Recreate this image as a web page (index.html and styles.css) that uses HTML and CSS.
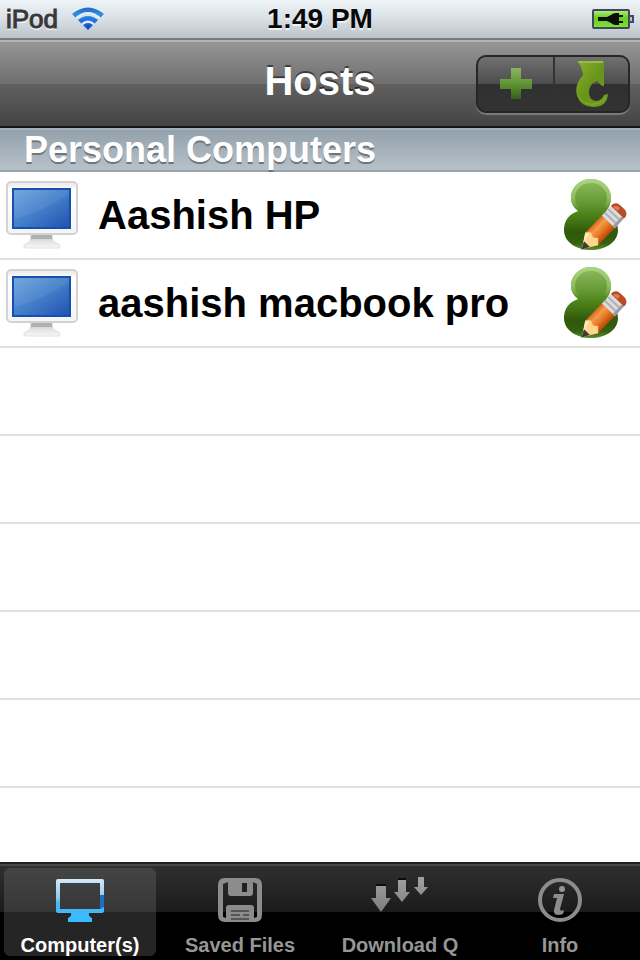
FILE: index.html
```html
<!DOCTYPE html>
<html lang="en">
<head>
    <meta charset="UTF-8">
    <meta name="viewport" content="width=device-width, initial-scale=1.0">
    <title>Hosts</title>
    <link rel="stylesheet" href="styles.css">
</head>
<body>
    <!-- shared icons -->
    <svg class="defs" width="0" height="0" aria-hidden="true">
        <defs>
            <linearGradient id="screen" x1="0" y1="0" x2="1" y2="1">
                <stop offset="0" stop-color="#6da4de"/>
                <stop offset="0.5" stop-color="#447fca"/>
                <stop offset="1" stop-color="#2250b0"/>
            </linearGradient>
            <linearGradient id="bezel" x1="0" y1="0" x2="0" y2="1">
                <stop offset="0" stop-color="#e6e6e6"/>
                <stop offset="0.15" stop-color="#ffffff"/>
                <stop offset="1" stop-color="#f4f4f4"/>
            </linearGradient>
            <linearGradient id="stand" x1="0" y1="0" x2="0" y2="1">
                <stop offset="0" stop-color="#aaaaaa"/>
                <stop offset="0.5" stop-color="#e2e2e2"/>
                <stop offset="1" stop-color="#f7f7f7"/>
            </linearGradient>
            <linearGradient id="person" gradientUnits="userSpaceOnUse" x1="0" y1="2" x2="0" y2="72">
                <stop offset="0" stop-color="#8dbb5f"/>
                <stop offset="0.3" stop-color="#679c37"/>
                <stop offset="0.5" stop-color="#4c8118"/>
                <stop offset="0.75" stop-color="#2f580b"/>
                <stop offset="0.9" stop-color="#34600e"/>
                <stop offset="1" stop-color="#5c8f2c"/>
            </linearGradient>
            <linearGradient id="rim" x1="0" y1="0" x2="0" y2="1">
                <stop offset="0" stop-color="#a9d37e"/>
                <stop offset="0.6" stop-color="#8fc060"/>
                <stop offset="1" stop-color="#8fc060" stop-opacity="0"/>
            </linearGradient>
            <linearGradient id="wood" x1="0" y1="0" x2="0" y2="1">
                <stop offset="0" stop-color="#d9681c"/>
                <stop offset="0.3" stop-color="#f59a4a"/>
                <stop offset="0.6" stop-color="#e87a25"/>
                <stop offset="1" stop-color="#b8450b"/>
            </linearGradient>
        </defs>
        <symbol id="monitor" viewBox="0 0 72 68">
            <path d="M25 53h21l1 7 7 4q1 3-2 3H20q-3 0-2-3l6-4z" fill="url(#stand)" stroke="#e2e2e2"/>
            <path d="M26 54h20v4H25z" fill="#b0b0b0"/>
            <rect x="1" y="1" width="70" height="52" rx="4" fill="url(#bezel)" stroke="#d3d3d3" stroke-width="2"/>
            <rect x="7" y="8" width="57" height="39" fill="url(#screen)" stroke="#1450ad" stroke-width="2"/>
            <path d="M8 9h55v4Q38 30 8 38z" fill="#ffffff" opacity="0.06"/>
        </symbol>
        <symbol id="edit-user" viewBox="0 0 66 74">
            <path d="M16 33Q9 28 9 20C9 9 18 1 29 1s20 8 20 19q0 7-4 12 11 7 11 20c0 12-12 20-27 20S2 64 2 52q0-14 14-19z" fill="url(#person)"/>
            <path d="M16 31Q11 26 11 20C11 10 19 3 29 3s18 7 18 17q0 6-4 11" fill="none" stroke="url(#rim)" stroke-width="4"/>
            <g transform="translate(20 71) rotate(-46)">
                <path d="M0 0l14-9h25V9H14z" fill="url(#wood)"/>
                <path d="M0 0l14-9 4 4-2 5 3 4-5 5z" fill="#ffd58b"/>
                <path d="M0 0l14-9 3 3z" fill="#ffe8b5"/>
                <path d="M-1 0l8-4v8z" fill="#3a3a3a"/>
                <path d="M38-9h13V9H38z" fill="#dcdce0"/>
                <path d="M42-9V9M47-9V9" stroke="#b0b0b6" stroke-width="2"/>
                <path d="M38 6h13v3H38z" fill="#9d9da5"/>
                <path d="M51-9h2q5 1 5 6v6q0 5-5 6h-2z" fill="#b84c22"/>
                <path d="M52-7q4 1 4 6h-4z" fill="#d98058"/>
            </g>
        </symbol>
    </svg>

    <div class="status-bar">
        <div class="carrier">
            <span>iPod</span>
            <svg class="wifi" width="32" height="24" viewBox="0 0 32 24" role="img" aria-label="Wi-Fi">
                <defs>
                    <linearGradient id="wave" x1="0" y1="0" x2="0" y2="1">
                        <stop offset="0" stop-color="#2465c4"/>
                        <stop offset="0.3" stop-color="#2d8cea"/>
                        <stop offset="1" stop-color="#0b45cf"/>
                    </linearGradient>
                </defs>
                <path d="M0 7Q16-6 32 7l-4 4Q16 1 4 11zM6 13q10-8 20 0l-4 4q-6-5-12 0zM11 18q5-4 10 0l-5 5z" fill="url(#wave)"/>
                <path d="M4 11Q16 1 28 11M10 17q6-5 12 0" fill="none" stroke="#e6eef5" stroke-width="2"/>
            </svg>
        </div>
        <span class="clock">1:49 PM</span>
        <svg class="battery" width="42" height="22" viewBox="0 0 42 22" role="img" aria-label="Charging">
            <defs>
                <linearGradient id="charge" x1="0" y1="0" x2="0" y2="1">
                    <stop offset="0" stop-color="#b5ee84"/>
                    <stop offset="0.45" stop-color="#68cc22"/>
                    <stop offset="1" stop-color="#82e43c"/>
                </linearGradient>
            </defs>
            <rect x="1" y="2" width="36" height="18" rx="1" fill="url(#charge)" stroke="#424858" stroke-width="2"/>
            <path d="M38 8h3v6h-3" fill="#b9c0c8" stroke="#424858" stroke-width="2"/>
            <path d="M6 9h9l4-2q2-2 5-2h3v2h4v2h-4v4h4v2h-4v2h-3q-3 0-5-2l-4-2H6z" fill="#0b0d08"/>
        </svg>
    </div>

    <header class="nav-bar">
        <h1>Hosts</h1>
        <div class="button-group">
            <button type="button" aria-label="Add host">
                <svg width="34" height="34" viewBox="0 0 34 34">
                    <defs>
                        <linearGradient id="plus" x1="0" y1="0" x2="0" y2="1">
                            <stop offset="0" stop-color="#8bb465"/>
                            <stop offset="0.5" stop-color="#619637"/>
                            <stop offset="1" stop-color="#395e1b"/>
                        </linearGradient>
                    </defs>
                    <path d="M12 1h10v11h11v10H22v10H12V22H1V12h11z" fill="url(#plus)"/>
                </svg>
            </button>
            <button type="button" aria-label="Refresh">
                <svg width="34" height="48" viewBox="0 0 34 48">
                    <defs>
                        <linearGradient id="arrow" x1="0" y1="0" x2="1" y2="1">
                            <stop offset="0" stop-color="#8cb02c"/>
                            <stop offset="0.5" stop-color="#679519"/>
                            <stop offset="1" stop-color="#6f9d20"/>
                        </linearGradient>
                    </defs>
                    <path d="M2 1h27v25h-2l-5-5q-8 3-8 11 0 9 8 9 5-1 7-6l4-1q-1 13-15 13Q6 47 2 36-1 25 8 15 7 6 2 1z" fill="url(#arrow)"/>
                    <path d="M4 2h24" stroke="#9aba49" stroke-width="2"/>
                    <path d="M4 37q6 9 16 7 7-1 10-7" fill="none" stroke="#8bb02c"/>
                </svg>
            </button>
        </div>
    </header>

    <main>
        <h2>Personal Computers</h2>
        <ul class="hosts">
            <li>
                <svg class="monitor" width="72" height="68"><use href="#monitor"/></svg>
                <a href="#">Aashish HP</a>
                <button type="button" aria-label="Edit Aashish HP">
                    <svg width="66" height="74"><use href="#edit-user"/></svg>
                </button>
            </li>
            <li>
                <svg class="monitor" width="72" height="68"><use href="#monitor"/></svg>
                <a href="#">aashish macbook pro</a>
                <button type="button" aria-label="Edit aashish macbook pro">
                    <svg width="66" height="74"><use href="#edit-user"/></svg>
                </button>
            </li>
        </ul>
    </main>

    <nav class="tab-bar">
        <a class="active" href="#" aria-current="page">
            <svg width="50" height="46" viewBox="0 0 50 46">
                <defs>
                    <linearGradient id="glow" x1="0" y1="0" x2="0" y2="1">
                        <stop offset="0" stop-color="#d3ebfa"/>
                        <stop offset="0.45" stop-color="#8fc8ee"/>
                        <stop offset="0.55" stop-color="#4db5f5"/>
                        <stop offset="1" stop-color="#36bdff"/>
                    </linearGradient>
                </defs>
                <path fill-rule="evenodd" d="M3 2h44q2 0 2 2v30q0 2-2 2H34q-1 3 3 5v4H13v-4q4-2 3-5H3q-2 0-2-2V4q0-2 2-2zM5 6v26h40V6z" fill="url(#glow)"/>
                <path d="M45 18h4v12l-4 2z" fill="#1671c6"/>
            </svg>
            <span>Computer(s)</span>
        </a>
        <a href="#">
            <svg width="46" height="46" viewBox="0 0 46 46">
                <path fill-rule="evenodd" d="M8 1h30q7 0 7 7v30q0 7-7 7H8q-7 0-7-7V8q0-7 7-7zM6 7v33l3 1V31q0-3 3-3h22q3 0 3 3v10l3-1V7l-4-2v11q0 3-3 3H14q-3 0-3-3V5z" fill="#8c8c8c"/>
                <path d="M25 6h5v9h-5z" fill="#222222"/>
                <path d="M14 34h18M14 38h9m3 0h6M14 42h18" stroke="#555555" stroke-width="2"/>
            </svg>
            <span>Saved Files</span>
        </a>
        <a href="#">
            <svg width="58" height="46" viewBox="0 0 58 46">
                <defs>
                    <linearGradient id="down" x1="0" y1="0" x2="0" y2="1">
                        <stop offset="0" stop-color="#a2a2a2"/>
                        <stop offset="1" stop-color="#7c7c7c"/>
                    </linearGradient>
                </defs>
                <path d="M5 9h10v12h5L10 35 0 21h5zM27 3h8v12h4l-8 10-8-10h4zM47 0h6v10h4l-7 8-7-8h4z" fill="url(#down)"/>
                <path d="M5 7h10v2H5zM27 1h8v2h-8z" fill="#0c0c0c"/>
            </svg>
            <span>Download Q</span>
        </a>
        <a href="#">
            <svg width="46" height="46" viewBox="0 0 46 46">
                <circle cx="23" cy="23" r="20" fill="none" stroke="#8c8c8c" stroke-width="4"/>
                <circle cx="25" cy="12" r="3" fill="#959595"/>
                <path d="M17 17h10l-4 15q0 3 4 1l-1 4q-10 3-9-4l3-12h-4z" fill="#8c8c8c"/>
            </svg>
            <span>Info</span>
        </a>
    </nav>
</body>
</html>
```

FILE: styles.css
```css
* {
    box-sizing: border-box;
}

body {
    margin: 0;
    min-height: 100vh;
    display: flex;
    flex-direction: column;
    font-family: "Liberation Sans", Arial, sans-serif;
    font-weight: bold;
    background-color: white;
}

h1, h2, ul {
    margin: 0;
    padding: 0;
}

a {
    color: inherit;
    text-decoration: none;
}

button {
    padding: 0;
    border: none;
    background: none;
    cursor: pointer;
}

svg {
    display: block;
}

.defs {
    position: absolute;
}

/* status bar */
.status-bar {
    display: grid;
    grid-template-columns: 1fr auto 1fr;
    align-items: center;
    height: 40px;
    padding: 0 6px;
    background: linear-gradient(#eef4f7, #d9e0e5 50%, #bbc3c9);
    border-bottom: 2px solid #737b80;
    text-shadow: 0 2px 0 rgba(255, 255, 255, 0.7);
}

.carrier {
    display: flex;
    align-items: center;
    gap: 14px;
    font-size: 26px;
    font-weight: normal;
    line-height: 36px;
    color: #383838;
    -webkit-text-stroke: 1px #383838;
}

.clock {
    font-size: 28px;
    line-height: 38px;
    color: #080808;
}

.battery {
    justify-self: end;
}

/* title bar */
.nav-bar {
    display: grid;
    grid-template-columns: 1fr auto 1fr;
    align-items: center;
    height: 88px;
    padding: 0 10px;
    background: linear-gradient(#969696, #6e6e6e 50%, #606060 50%, #444444);
    border-top: 2px solid #b5b5b5;
    border-bottom: 2px solid #161616;
}

.nav-bar h1 {
    grid-column: 2;
    padding-bottom: 6px;
    font-size: 40px;
    line-height: 44px;
    color: white;
    text-shadow: 0 -2px 0 rgba(0, 0, 0, 0.5);
}

.button-group {
    justify-self: end;
    display: flex;
    height: 58px;
    border: 2px solid #262626;
    border-radius: 10px;
    background: linear-gradient(#707070, #4d4d4d 50%, #303030 50%, #333333);
    box-shadow: 0 2px 0 rgba(255, 255, 255, 0.25);
}

.button-group button {
    display: flex;
    align-items: center;
    justify-content: center;
    width: 75px;
}

.button-group button + button {
    border-left: 2px solid #333333;
}

/* host list */
main {
    flex: 1;
    display: flex;
    flex-direction: column;
}

h2 {
    padding-left: 24px;
    border-top: 2px solid #a4b0b9;
    border-bottom: 2px solid #98a3ab;
    background: linear-gradient(#92a1ac, #b8c1c8);
    font-size: 36px;
    line-height: 40px;
    color: white;
    text-shadow: 0 2px 0 #6d767d;
}

.hosts {
    flex: 1;
    list-style: none;
    background: repeating-linear-gradient(white 0, white 86px, #e0e0e0 86px, #e0e0e0 88px);
}

.hosts li {
    display: flex;
    align-items: center;
    gap: 20px;
    height: 88px;
    padding: 0 12px 2px 6px;
}

.hosts a {
    flex: 1;
    font-size: 40px;
    line-height: 48px;
    color: black;
}

/* tabs */
.tab-bar {
    display: grid;
    grid-template-columns: repeat(4, 1fr);
    height: 98px;
    padding: 2px 0 4px;
    background: linear-gradient(#303030, #1b1b1b 50%, black 50%);
    border-top: 2px solid #202020;
    box-shadow: inset 0 2px 0 #474747;
}

.tab-bar a {
    display: flex;
    flex-direction: column;
    align-items: center;
    justify-content: space-between;
    margin: 2px 4px 0;
    padding-top: 9px;
    border-radius: 6px;
    font-size: 20px;
    line-height: 22px;
    color: #969696;
}

.tab-bar .active {
    background: linear-gradient(#444444, #373737 50%, #252525 50%);
    color: white;
}
```
